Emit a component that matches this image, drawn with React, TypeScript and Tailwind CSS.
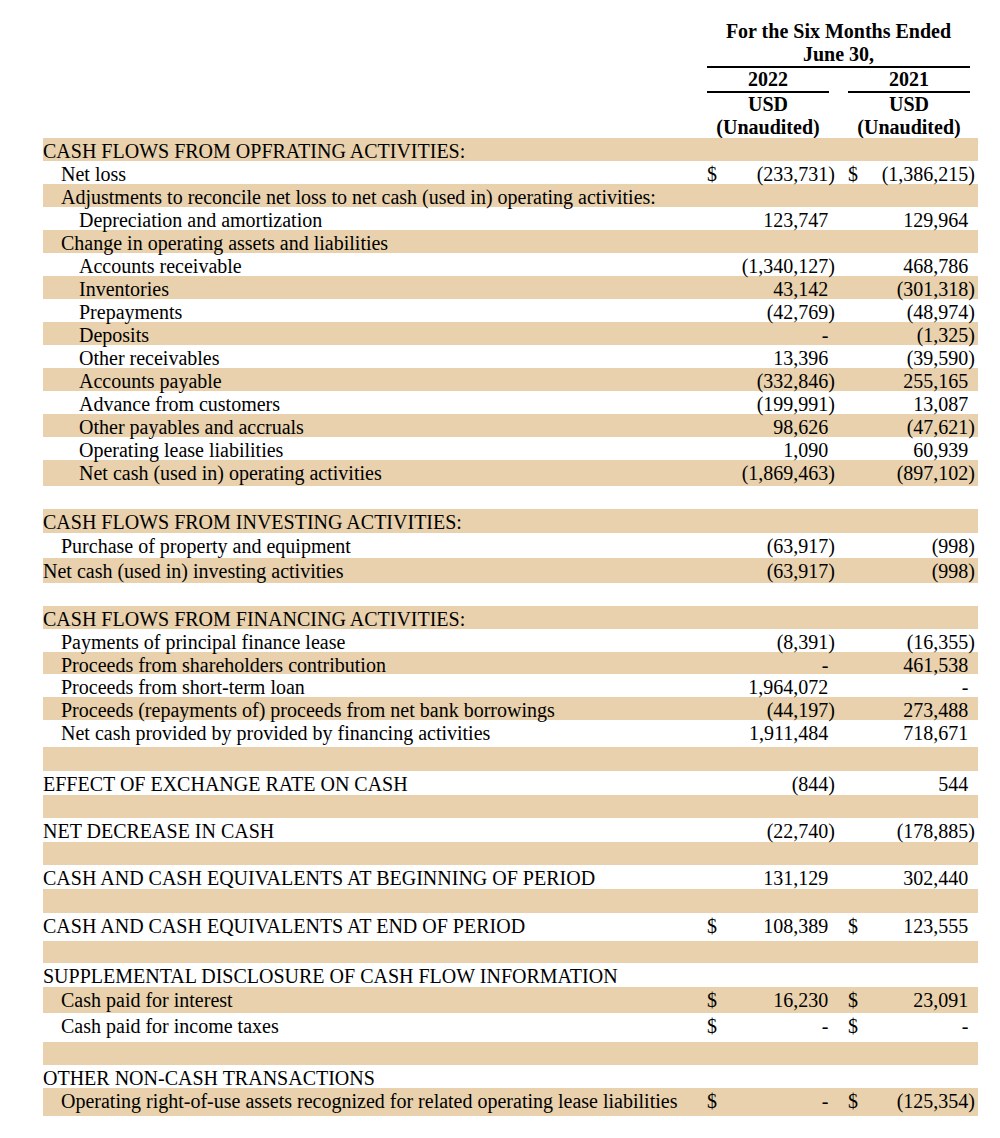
import React from "react";

type Cell = { d?: boolean; v?: string };
type Row = { l?: string; i?: number; t?: boolean; h: string; a?: Cell; b?: Cell };

const rows: Row[] = [
  { l: "CASH FLOWS FROM OPFRATING ACTIVITIES:", i: 0, t: true, h: "h-[23px]" },
  { l: "Net loss", i: 1, h: "h-[23px]", a: { d: true, v: "(233,731)" }, b: { d: true, v: "(1,386,215)" } },
  { l: "Adjustments to reconcile net loss to net cash (used in) operating activities:", i: 1, t: true, h: "h-[23px]" },
  { l: "Depreciation and amortization", i: 2, h: "h-[23px]", a: { v: "123,747" }, b: { v: "129,964" } },
  { l: "Change in operating assets and liabilities", i: 1, t: true, h: "h-[23px]" },
  { l: "Accounts receivable", i: 2, h: "h-[23px]", a: { v: "(1,340,127)" }, b: { v: "468,786" } },
  { l: "Inventories", i: 2, t: true, h: "h-[23px]", a: { v: "43,142" }, b: { v: "(301,318)" } },
  { l: "Prepayments", i: 2, h: "h-[23px]", a: { v: "(42,769)" }, b: { v: "(48,974)" } },
  { l: "Deposits", i: 2, t: true, h: "h-[23px]", a: { v: "-" }, b: { v: "(1,325)" } },
  { l: "Other receivables", i: 2, h: "h-[23px]", a: { v: "13,396" }, b: { v: "(39,590)" } },
  { l: "Accounts payable", i: 2, t: true, h: "h-[23px]", a: { v: "(332,846)" }, b: { v: "255,165" } },
  { l: "Advance from customers", i: 2, h: "h-[23px]", a: { v: "(199,991)" }, b: { v: "13,087" } },
  { l: "Other payables and accruals", i: 2, t: true, h: "h-[23px]", a: { v: "98,626" }, b: { v: "(47,621)" } },
  { l: "Operating lease liabilities", i: 2, h: "h-[23px]", a: { v: "1,090" }, b: { v: "60,939" } },
  { l: "Net cash (used in) operating activities", i: 2, t: true, h: "h-[26px]", a: { v: "(1,869,463)" }, b: { v: "(897,102)" } },
  { h: "h-[23px]" },
  { l: "CASH FLOWS FROM INVESTING ACTIVITIES:", i: 0, t: true, h: "h-[24px]" },
  { l: "Purchase of property and equipment", i: 1, h: "h-[25px]", a: { v: "(63,917)" }, b: { v: "(998)" } },
  { l: "Net cash (used in) investing activities", i: 0, t: true, h: "h-[25px]", a: { v: "(63,917)" }, b: { v: "(998)" } },
  { h: "h-[23px]" },
  { l: "CASH FLOWS FROM FINANCING ACTIVITIES:", i: 0, t: true, h: "h-[23px]" },
  { l: "Payments of principal finance lease", i: 1, h: "h-[23px]", a: { v: "(8,391)" }, b: { v: "(16,355)" } },
  { l: "Proceeds from shareholders contribution", i: 1, t: true, h: "h-[22px]", a: { v: "-" }, b: { v: "461,538" } },
  { l: "Proceeds from short-term loan", i: 1, h: "h-[23px]", a: { v: "1,964,072" }, b: { v: "-" } },
  { l: "Proceeds (repayments of) proceeds from net bank borrowings", i: 1, t: true, h: "h-[23px]", a: { v: "(44,197)" }, b: { v: "273,488" } },
  { l: "Net cash provided by provided by financing activities", i: 1, h: "h-[27px]", a: { v: "1,911,484" }, b: { v: "718,671" } },
  { t: true, h: "h-[24px]" },
  { l: "EFFECT OF EXCHANGE RATE ON CASH", i: 0, h: "h-[24px]", a: { v: "(844)" }, b: { v: "544" } },
  { t: true, h: "h-[23px]" },
  { l: "NET DECREASE IN CASH", i: 0, h: "h-[24px]", a: { v: "(22,740)" }, b: { v: "(178,885)" } },
  { t: true, h: "h-[23px]" },
  { l: "CASH AND CASH EQUIVALENTS AT BEGINNING OF PERIOD", i: 0, h: "h-[24px]", a: { v: "131,129" }, b: { v: "302,440" } },
  { t: true, h: "h-[24px]" },
  { l: "CASH AND CASH EQUIVALENTS AT END OF PERIOD", i: 0, h: "h-[28px]", a: { d: true, v: "108,389" }, b: { d: true, v: "123,555" } },
  { t: true, h: "h-[22px]" },
  { l: "SUPPLEMENTAL DISCLOSURE OF CASH FLOW INFORMATION", i: 0, h: "h-[24px]" },
  { l: "Cash paid for interest", i: 1, t: true, h: "h-[26px]", a: { d: true, v: "16,230" }, b: { d: true, v: "23,091" } },
  { l: "Cash paid for income taxes", i: 1, h: "h-[29px]", a: { d: true, v: "-" }, b: { d: true, v: "-" } },
  { t: true, h: "h-[23px]" },
  { l: "OTHER NON-CASH TRANSACTIONS", i: 0, h: "h-[23px]" },
  { l: "Operating right-of-use assets recognized for related operating lease liabilities", i: 1, t: true, h: "h-[28px]", a: { d: true, v: "-" }, b: { d: true, v: "(125,354)" } },
];

function Val({ v }: { v?: string }) {
  if (!v) return <span />;
  const paren = v.endsWith(")");
  return (
    <span>
      {v}
      {!paren && <span className="invisible">)</span>}
    </span>
  );
}

const indentCls = ["pl-0", "pl-[18px]", "pl-[36px]"];

export default function App() {
  return (
    <div className="w-[1000px] h-[1138px] bg-white text-black font-['Liberation_Serif',serif] text-[20px] leading-[23px] overflow-hidden">
      <div className="h-[138px] pt-[20px]">
        <div className="ml-[707px] w-[263px] font-bold text-center">
          <div className="border-b-2 border-black">
            <div>For the Six Months Ended</div>
            <div>June 30,</div>
          </div>
          <div className="flex justify-between">
            <div className="w-[122px]">
              <div className="border-b-2 border-black">2022</div>
              <div>USD</div>
              <div>(Unaudited)</div>
            </div>
            <div className="w-[122px]">
              <div className="border-b-2 border-black">2021</div>
              <div>USD</div>
              <div>(Unaudited)</div>
            </div>
          </div>
        </div>
      </div>
      <div className="relative ml-[43px] w-[935px]">
        {rows.map((r, idx) => (
          <div key={idx} className={`flex items-start pt-[2px] ${r.h} ${r.t ? "bg-[#e8d1ac]" : "bg-white"}`}>
            <div className={`w-[664px] whitespace-nowrap ${indentCls[r.i ?? 0]}`}>{r.l ?? ""}</div>
            <div className="w-[136px] flex justify-between pr-[8px]">
              <span>{r.a?.d ? "$" : ""}</span>
              <Val v={r.a?.v} />
            </div>
            <div className="w-[135px] flex justify-between pl-[5px] pr-[3px]">
              <span>{r.b?.d ? "$" : ""}</span>
              <Val v={r.b?.v} />
            </div>
          </div>
        ))}
      </div>
    </div>
  );
}
